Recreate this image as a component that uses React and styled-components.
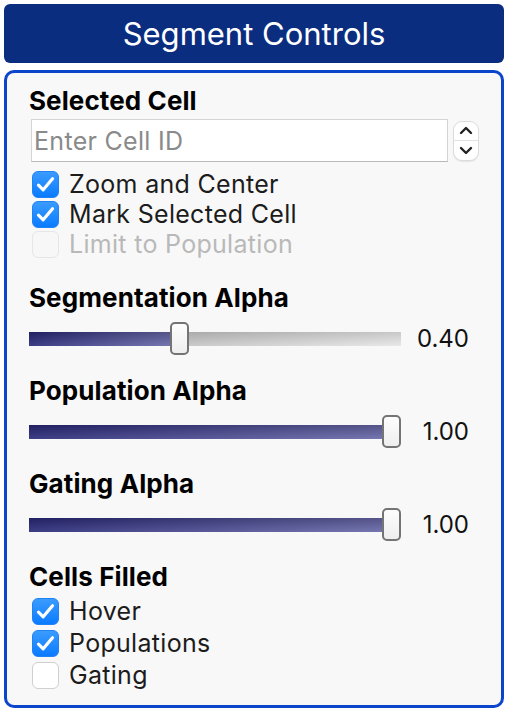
import React, { useState } from "react";
import styled, { createGlobalStyle } from "styled-components";

const GlobalStyle = createGlobalStyle`
    body {
        margin: 0;
        background: #ffffff;
        font-family: Inter, "Noto Sans", "Liberation Sans", sans-serif;
        color: #111;
    }
`;

const Check = () => (
    <svg width="21" height="19" viewBox="0 0 21 19" fill="none">
        <path d="M3.5 10.2 L8.2 14.8 L17.5 3.8" stroke="#fff" strokeWidth="3.2" strokeLinecap="round" strokeLinejoin="round" />
    </svg>
);

const Checkbox = ({ label, checked, disabled, onChange }) => (
    <CheckRow $disabled={disabled} onClick={() => !disabled && onChange(!checked)}>
        <Box $checked={checked} $disabled={disabled}>{checked && <Check />}</Box>
        <span>{label}</span>
    </CheckRow>
);

const Slider = ({ value }) => (
    <SliderRow>
        <Track>
            <Fill style={{ width: `${value * 100}%` }} />
            <Thumb style={{ left: `calc(${value} * (100% - 19px))` }} />
        </Track>
        <Value>{value.toFixed(2)}</Value>
    </SliderRow>
);

export default function App() {
    const [zoom, setZoom] = useState(true);
    const [mark, setMark] = useState(true);
    const [hover, setHover] = useState(true);
    const [pops, setPops] = useState(true);
    const [gating, setGating] = useState(false);

    return (
        <>
            <GlobalStyle />
            <Page>
                <Header>Segment Controls</Header>
                <Panel>
                    <Section>
                        <Title>Selected Cell</Title>
                        <InputRow>
                            <CellInput placeholder="Enter Cell ID" />
                            <Spinner>
                                <SpinBtn>
                                    <svg width="14" height="9" viewBox="0 0 14 9"><path d="M2 7 L7 2 L12 7" stroke="#222" strokeWidth="2.4" fill="none" strokeLinecap="round" strokeLinejoin="round" /></svg>
                                </SpinBtn>
                                <SpinBtn>
                                    <svg width="14" height="9" viewBox="0 0 14 9"><path d="M2 2 L7 7 L12 2" stroke="#222" strokeWidth="2.4" fill="none" strokeLinecap="round" strokeLinejoin="round" /></svg>
                                </SpinBtn>
                            </Spinner>
                        </InputRow>
                        <CheckList $gap={3}>
                            <Checkbox label="Zoom and Center" checked={zoom} onChange={setZoom} />
                            <Checkbox label="Mark Selected Cell" checked={mark} onChange={setMark} />
                            <Checkbox label="Limit to Population" checked={false} disabled />
                        </CheckList>
                    </Section>
                    <Section $top={26}>
                        <Title>Segmentation Alpha</Title>
                        <Slider value={0.4} />
                    </Section>
                    <Section $top={22}>
                        <Title>Population Alpha</Title>
                        <Slider value={1} />
                    </Section>
                    <Section $top={22}>
                        <Title>Gating Alpha</Title>
                        <Slider value={1} />
                    </Section>
                    <Section $top={22}>
                        <Title>Cells Filled</Title>
                        <CheckList $gap={5} $top={7}>
                            <Checkbox label="Hover" checked={hover} onChange={setHover} />
                            <Checkbox label="Populations" checked={pops} onChange={setPops} />
                            <Checkbox label="Gating" checked={gating} onChange={setGating} />
                        </CheckList>
                    </Section>
                </Panel>
            </Page>
        </>
    );
}

const Page = styled.div`
    width: 500px;
    padding: 4px;
    display: flex;
    flex-direction: column;
    gap: 7px;
`;

const Header = styled.div`
    height: 59px;
    background: #0a2d80;
    border-radius: 6px;
    color: #fff;
    font-size: 31px;
    display: flex;
    align-items: center;
    justify-content: center;
`;

const Panel = styled.div`
    border: 3px solid #0b45cc;
    border-radius: 10px;
    background: #f8f8f8;
    padding: 14px 22px 16px 22px;
    display: flex;
    flex-direction: column;
`;

const Section = styled.div`
    display: flex;
    flex-direction: column;
    margin-top: ${(p) => p.$top || 0}px;
`;

const Title = styled.div`
    font-size: 26px;
    font-weight: 700;
    line-height: 28px;
    letter-spacing: 0.1px;
    color: #000;
`;

const InputRow = styled.div`
    display: flex;
    align-items: center;
    gap: 5px;
    margin: 4px 0 9px 2px;
`;

const CellInput = styled.input`
    width: 417px;
    height: 43px;
    box-sizing: border-box;
    border: 1px solid #d4d4d4;
    border-bottom-color: #b8b8b8;
    background: #fff;
    font-family: inherit;
    font-size: 25px;
    letter-spacing: 0.3px;
    padding: 0 2px;
    outline: none;
    &::placeholder {
        color: #8a8a8a;
    }
`;

const Spinner = styled.div`
    width: 26px;
    height: 40px;
    box-sizing: border-box;
    border: 1px solid #dcdcdc;
    border-radius: 9px;
    background: #fff;
    display: flex;
    flex-direction: column;
    box-shadow: 0 1px 1px rgba(0, 0, 0, 0.08);
    overflow: hidden;
`;

const SpinBtn = styled.div`
    flex: 1;
    display: flex;
    align-items: center;
    justify-content: center;
    &:first-child {
        border-bottom: 1px solid #e2e2e2;
    }
`;

const CheckList = styled.div`
    display: flex;
    flex-direction: column;
    gap: ${(p) => p.$gap}px;
    margin-top: ${(p) => p.$top || 0}px;
    padding-left: 3px;
`;

const CheckRow = styled.label`
    display: flex;
    align-items: center;
    gap: 10px;
    font-size: 25px;
    letter-spacing: 0.3px;
    line-height: 27px;
    color: ${(p) => (p.$disabled ? "#b9b9b9" : "#1c1c1c")};
`;

const Box = styled.span`
    width: 27px;
    height: 27px;
    flex-shrink: 0;
    box-sizing: border-box;
    border-radius: 6px;
    display: flex;
    align-items: center;
    justify-content: center;
    background: ${(p) =>
        p.$checked ? "linear-gradient(#3b9cff, #0a7bff)" : p.$disabled ? "#f7f7f7" : "#fff"};
    border: 1px solid ${(p) => (p.$checked ? "#1f82f5" : p.$disabled ? "#e6e6e6" : "#cfcfcf")};
`;

const SliderRow = styled.div`
    display: flex;
    align-items: center;
    height: 33px;
    margin-top: 10px;
`;

const Track = styled.div`
    position: relative;
    width: 372px;
    height: 14px;
    background: linear-gradient(to bottom, rgba(0, 0, 0, 0.12), rgba(255, 255, 255, 0.15)),
        linear-gradient(to right, #a8a8a8, #e4e4e4);
`;

const Fill = styled.div`
    height: 100%;
    background: linear-gradient(to bottom, rgba(0, 0, 0, 0.18), rgba(255, 255, 255, 0.1)),
        linear-gradient(to right, #282878, #6a6aaa);
`;

const Thumb = styled.div`
    position: absolute;
    top: -10px;
    width: 19px;
    height: 33px;
    box-sizing: border-box;
    border: 2px solid #747474;
    border-radius: 5px;
    background: linear-gradient(#fdfdfd, #eeeeee);
`;

const Value = styled.div`
    width: 68px;
    text-align: right;
    font-size: 24px;
    color: #111;
`;
